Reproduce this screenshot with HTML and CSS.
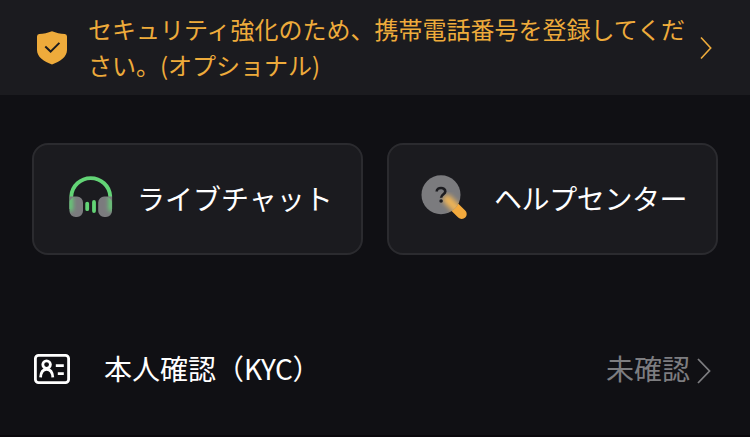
FILE: index.html
```html
<!DOCTYPE html>
<html lang="ja">
<head>
  <meta charset="UTF-8" />
  <meta name="viewport" content="width=device-width, initial-scale=1.0" />
  <title>アカウント</title>
  <link rel="stylesheet" href="styles.css">
</head>
<body>
  <!-- Security notice -->
  <a class="notice">
    <svg class="notice-icon" width="30" height="34" viewBox="0 0 30 34">
      <path d="M15 0.2 C19 1.8 23.5 2.8 27.8 3 Q30 3.2 30 5.4 V19 C30 26 23 30.5 15 33.6 C7 30.5 0 26 0 19 V5.4 Q0 3.2 2.2 3 C6.5 2.8 11 1.8 15 0.2Z" fill="#eeab3b"/>
      <path d="M8.3 15.6 L13.6 20.6 L22.4 11.9" fill="none" stroke="#1b1b1f" stroke-width="2"/>
    </svg>
    <p class="notice-text">セキュリティ強化のため、携帯電話番号を登録してください。(オプショナル)</p>
    <svg class="notice-arrow" width="12" height="24" viewBox="0 0 12 24">
      <path d="M1 1.5 L10.7 12 L1 22.5" fill="none" stroke="#eeab3b" stroke-width="1.6"/>
    </svg>
  </a>

  <!-- Support cards -->
  <div class="support">
    <a class="card chat">
      <svg width="44" height="44" viewBox="0 0 44 44">
        <defs>
          <filter id="soft" x="-10" y="10" width="64" height="40" filterUnits="userSpaceOnUse"><feGaussianBlur stdDeviation="2"/></filter>
          <clipPath id="ears">
            <rect x="0.5" y="21.5" width="14" height="20.5" rx="6.5"/>
            <rect x="29" y="21.5" width="14" height="20.5" rx="6.5"/>
          </clipPath>
        </defs>
        <path d="M2.3 34 V21 A19.5 19.3 0 0 1 41.2 21 V34" fill="none" stroke="#63d476" stroke-width="3.8"/>
        <path d="M0.5 21.5 H8 A6 6 0 0 1 14 27.5 V36 A6 6 0 0 1 8 42 H6.5 A6 6 0 0 1 0.5 36Z" fill="#7b7b7e"/>
        <path d="M43 21.5 H35.5 A6 6 0 0 0 29.2 27.5 V36 A6 6 0 0 0 35.5 42 H37 A6 6 0 0 0 43 36Z" fill="#7b7b7e"/>
        <g clip-path="url(#ears)">
          <path d="M1.5 20 V36 M42 20 V36" stroke="#63d476" stroke-width="4.8" filter="url(#soft)"/>
        </g>
        <path d="M18.2 28.6 V34.2 M25 26.9 V36.1" stroke="#63d476" stroke-width="3.8" stroke-linecap="round"/>
      </svg>
      <span>ライブチャット</span>
    </a>
    <a class="card help">
      <svg width="48" height="46" viewBox="0 0 48 46">
        <defs>
          <clipPath id="lens"><circle cx="20" cy="19.7" r="19.5"/></clipPath>
          <filter id="glow" x="-50%" y="-50%" width="200%" height="200%"><feGaussianBlur stdDeviation="2.5"/></filter>
        </defs>
        <path d="M28 26.5 L40.7 39" stroke="#f3aa3d" stroke-width="10" stroke-linecap="round"/>
        <circle cx="20" cy="19.7" r="19.5" fill="#7b7b7e"/>
        <g clip-path="url(#lens)">
          <path d="M26.5 24.5 L40 38" stroke="#edb456" stroke-width="9" stroke-linecap="round" filter="url(#glow)"/>
        </g>
        <path d="M15.7 16.6 C15.7 11.8 24.3 11.8 24.3 16.5 C24.3 19.2 20.1 19.3 20.1 22.8" fill="none" stroke="#1c1c20" stroke-width="2.6"/>
        <circle cx="20.1" cy="26" r="1.8" fill="#1c1c20"/>
      </svg>
      <span>ヘルプセンター</span>
    </a>
  </div>

  <!-- KYC row -->
  <a class="row">
    <svg class="row-icon" width="36" height="31" viewBox="0 0 36 31">
      <g fill="none" stroke="#fff" stroke-width="2.8">
        <rect x="1.4" y="1.4" width="33.2" height="27.2" rx="3.2"/>
        <circle cx="12.6" cy="10.6" r="3.8"/>
        <path d="M6.6 23.4 C6.9 18 9.2 15.4 12.6 15.4 C16 15.4 18.5 18 18.8 23.4"/>
        <path d="M21.8 11.6 H29.8 M23.8 19.6 H29.8" stroke-width="2.6"/>
      </g>
    </svg>
    <span class="row-label">本人確認（<span class="latin">KYC</span>）</span>
    <span class="row-status">未確認</span>
    <svg class="row-arrow" width="14" height="26" viewBox="0 0 14 26">
      <path d="M1 1 L12.5 13 L1 25" fill="none" stroke="#7d7d80" stroke-width="1.8"/>
    </svg>
  </a>
</body>
</html>
```

FILE: styles.css
```css
* {
  box-sizing: border-box;
}

body {
  margin: 0;
  height: 437px;
  overflow: hidden;
  background: #101014;
  border-bottom: 2px solid #0a080c;
  color: #fff;
  font-family: "Noto Sans CJK JP", sans-serif;
}

svg {
  display: block;
  flex-shrink: 0;
}

.notice {
  display: flex;
  align-items: center;
  height: 95px;
  padding: 0 38px 0 37px;
  background: #1b1b1f;
  color: #eeab3b;
}

.notice-text {
  flex: none;
  width: 602px;
  margin: 0 10px 0 21px;
  padding-bottom: 2px;
  font-size: 24px;
  line-height: 36px;
}

.support {
  display: grid;
  grid-template-columns: 1fr 1fr;
  gap: 24px;
  padding: 48px 32px 0;
}

.card {
  display: flex;
  align-items: center;
  height: 112px;
  padding-left: 35px;
  padding-bottom: 4px;
  background: #1b1b1f;
  border: 2px solid #2b2b2f;
  border-radius: 16px;
  font-size: 28px;
  line-height: 42px;
}

.card span {
  padding-top: 1px;
}

.chat span {
  margin-left: 24px;
}

.help {
  padding-left: 32px;
  padding-bottom: 2px;
}

.help span {
  margin-left: 25px;
  padding-top: 0;
  letter-spacing: -0.4px;
}

.row {
  display: flex;
  align-items: center;
  margin-top: 72px;
  padding: 0 39px 0 34px;
  height: 84px;
  font-size: 28px;
  line-height: 42px;
}

.row-label {
  margin-left: 34px;
  padding-bottom: 2px;
}

.latin {
  letter-spacing: -0.5px;
}

.row-status {
  margin-left: auto;
  padding-bottom: 2px;
  color: #7d7d80;
}

.row-arrow {
  margin: 4px 0 0 7px;
}
```
